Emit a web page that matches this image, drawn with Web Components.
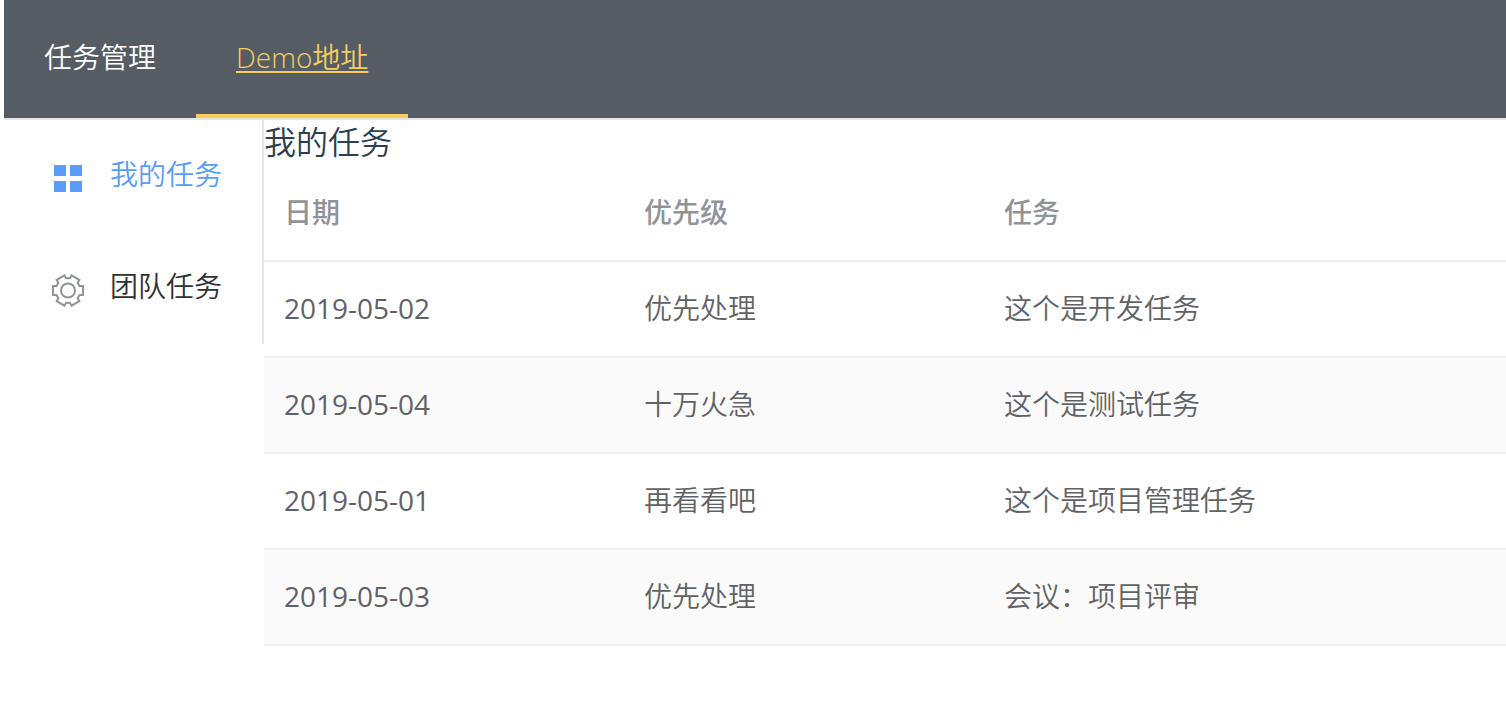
<!DOCTYPE html>
<html lang="zh-CN">
<head>
<meta charset="utf-8">
<meta name="viewport" content="width=device-width, initial-scale=1">
<title>任务管理</title>
<style>
    body {
        margin: 0 0 0 4px;
        background: #fff;
        color: #2c3e50;
        font-family: "Liberation Sans", "Noto Sans CJK SC", sans-serif;
        font-size: 28px;
        font-weight: 350;
        overflow-x: hidden;
    }
</style>
</head>
<body>
<task-app></task-app>

<script>
class NavBar extends HTMLElement {
    constructor() {
        super();
        this.attachShadow({ mode: 'open' });
        this.shadowRoot.innerHTML = `<style>
            :host {
                display: block;
                background: #555c64;
                border-bottom: 2px solid #e6e6e6;
            }
            nav {
                display: flex;
            }
        </style>
        <nav><slot></slot></nav>`;
    }
}

class NavItem extends HTMLElement {
    constructor() {
        super();
        this.attachShadow({ mode: 'open' });
    }

    connectedCallback() {
        this.shadowRoot.innerHTML = `<style>
            :host {
                display: block;
                font-family: "Open Sans", "Noto Sans CJK SC", sans-serif;
            }
            a {
                display: block;
                padding: 0 40px;
                line-height: 114px;
                border-bottom: 4px solid transparent;
                color: #fff;
                text-decoration: none;
            }
            :host([active]) a {
                color: #f6ce60;
                border-bottom-color: #f6ce60;
                text-decoration: underline;
                text-decoration-thickness: 2px;
                text-underline-offset: 3px;
                text-decoration-skip-ink: none;
            }
        </style>
        <a href="${this.getAttribute('href') || '#'}"><slot></slot></a>`;
    }
}

class SideMenu extends HTMLElement {
    constructor() {
        super();
        this.attachShadow({ mode: 'open' });
        this.shadowRoot.innerHTML = `<style>
            :host {
                display: block;
                border-right: 2px solid #e6e6e6;
            }
        </style>
        <nav><slot></slot></nav>`;
    }
}

const icons = {
    menu: `<svg viewBox="0 0 36 36" fill="currentColor">
        <path d="M4 5h12v11H4zM20 5h12v11H20zM4 21h12v11H4zM20 21h12v11H20z"/>
    </svg>`,
    setting: `<svg viewBox="0 0 36 36" fill="none" stroke="currentColor" stroke-width="2">
        <path d="M29.500 14H33V23H29.500L27.650 26.210L29.400 29.240L21.600 33.740L19.850 30.710H16.150L14.400 33.740L6.600 29.240L8.350 26.210L6.500 23H3V14H6.500L8.350 10.790L6.600 7.760L14.400 3.260L16.150 6.290H19.850L21.600 3.260L29.400 7.760L27.650 10.790Z"/>
        <circle cx="18" cy="18.500" r="7"/>
    </svg>`
};

class SideItem extends HTMLElement {
    constructor() {
        super();
        this.attachShadow({ mode: 'open' });
    }

    connectedCallback() {
        this.shadowRoot.innerHTML = `<style>
            :host {
                display: block;
            }
            a {
                display: flex;
                align-items: center;
                gap: 24px;
                padding: 0 40px 0 46px;
                line-height: 112px;
                color: #303133;
                text-decoration: none;
                white-space: nowrap;
            }
            svg {
                display: block;
                width: 36px;
                height: 36px;
                padding-top: 4px;
                color: #909399;
            }
            :host([active]) a, :host([active]) svg {
                color: #5a9cf8;
            }
        </style>
        <a href="#">${icons[this.getAttribute('icon')]}<span><slot></slot></span></a>`;
    }
}

class TaskTable extends HTMLElement {
    constructor() {
        super();
        this.attachShadow({ mode: 'open' });
    }

    connectedCallback() {
        const rows = [
            ['2019-05-02', '优先处理', '这个是开发任务'],
            ['2019-05-04', '十万火急', '这个是测试任务'],
            ['2019-05-01', '再看看吧', '这个是项目管理任务'],
            ['2019-05-03', '优先处理', '会议：项目评审']
        ];
        this.render(rows);
    }

    render(rows) {
        const body = rows.map(row => `<tr>${row.map(cell => `<td>${cell}</td>`).join('')}</tr>`).join('');
        this.shadowRoot.innerHTML = `<style>
            :host {
                display: block;
                font-family: "Open Sans", "Noto Sans CJK SC", sans-serif;
            }
            table {
                width: 100%;
                table-layout: fixed;
                border-collapse: separate;
                border-spacing: 0;
                color: #606266;
            }
            col.fixed {
                width: 360px;
            }
            th, td {
                padding: 24px 20px 26px;
                line-height: 44px;
                text-align: left;
                border-bottom: 2px solid #ebeef5;
            }
            th {
                color: #909399;
                font-weight: 500;
            }
            td:first-child {
                font-weight: 400;
            }
            tbody tr:nth-child(even) td {
                background: #fafafa;
            }
        </style>
        <table>
            <colgroup><col class="fixed"><col class="fixed"><col></colgroup>
            <thead><tr><th>日期</th><th>优先级</th><th>任务</th></tr></thead>
            <tbody>${body}</tbody>
        </table>`;
    }
}

class TaskApp extends HTMLElement {
    constructor() {
        super();
        this.attachShadow({ mode: 'open' });
        this.shadowRoot.innerHTML = `<style>
            :host {
                display: block;
            }
            .main {
                display: flex;
                align-items: flex-start;
            }
            side-menu {
                flex: 0 0 258px;
            }
            main {
                flex: 1;
                min-width: 0;
            }
            h1 {
                margin: 0;
                font-size: 32px;
                font-weight: inherit;
                line-height: 46px;
            }
        </style>
        <nav-bar>
            <nav-item>任务管理</nav-item>
            <nav-item active>Demo地址</nav-item>
        </nav-bar>
        <div class="main">
            <side-menu>
                <side-item icon="menu" active>我的任务</side-item>
                <side-item icon="setting">团队任务</side-item>
            </side-menu>
            <main>
                <h1>我的任务</h1>
                <task-table></task-table>
            </main>
        </div>`;
    }
}

customElements.define('nav-bar', NavBar);
customElements.define('nav-item', NavItem);
customElements.define('side-menu', SideMenu);
customElements.define('side-item', SideItem);
customElements.define('task-table', TaskTable);
customElements.define('task-app', TaskApp);
</script>
</body>
</html>
